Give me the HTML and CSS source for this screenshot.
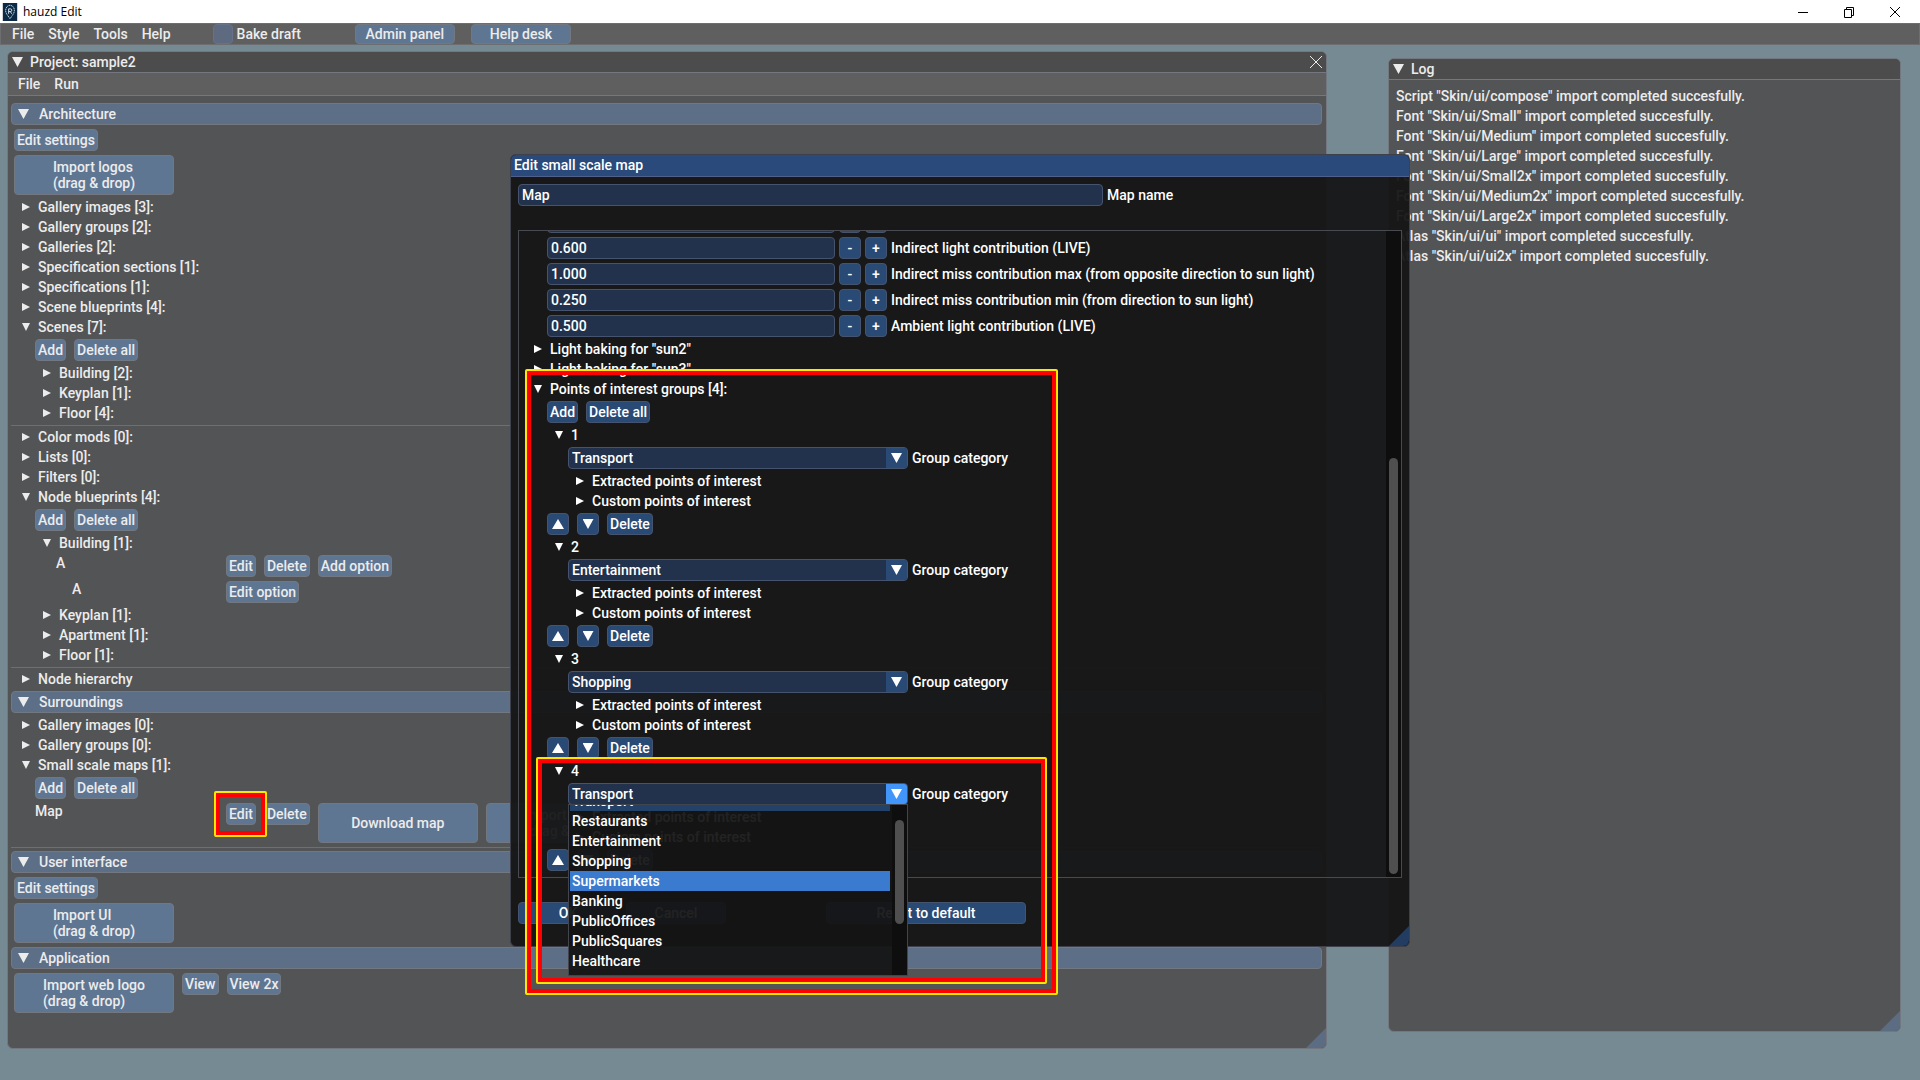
FILE: index.html
```html
<!DOCTYPE html>
<html lang="en">
<head>
<meta charset="utf-8">
<title>hauzd Edit</title>
<link rel="stylesheet" href="styles.css">
</head>
<body>
<header class="titlebar">
  <svg class="logo" viewBox="0 0 16 20" aria-hidden="true"><rect width="16" height="20" fill="#0c2a45"/><path d="M8 17.500L4.500 12.500C2 9 3 3 8 2.500C13 3 14 9 11.500 12.500Z" fill="none" stroke="#b8d4e2" stroke-width="1.100" stroke-dasharray="1.600 .6"/><path d="M6.500 12V6.500H8.500Q10 6.500 10 8T8.500 9.500H6.500M8.300 9.500L10 12" fill="none" stroke="#e4f2f8" stroke-width="1"/></svg>
  <span class="app-name">hauzd Edit</span>
  <div class="win-controls">
    <button aria-label="Minimize"><svg viewBox="0 0 12 12"><path d="M1 6.500H11" /></svg></button>
    <button aria-label="Restore"><svg viewBox="0 0 12 12"><path d="M1.500 3.500H8.500V11.500H1.500ZM3.500 3.500V1.500H10.500V9.500H8.500"/></svg></button>
    <button aria-label="Close"><svg viewBox="0 0 12 12"><path d="M1 1L11 11M11 1L1 11"/></svg></button>
  </div>
</header>
<nav class="menubar">
  <button class="menu">File</button><button class="menu">Style</button><button class="menu">Tools</button><button class="menu">Help</button>
  <label class="bake"><input type="checkbox">Bake draft</label>
  <div class="links"><button class="btn w100">Admin panel</button><button class="btn w100">Help desk</button></div>
</nav>

<main class="desktop">
  <section class="window project">
    <div class="bar"><i class="tri down big"></i><span>Project: sample2</span>
      <button class="close" aria-label="Close project"><svg viewBox="0 0 12 12"><path d="M0 0L12 12M12 0L0 12"/></svg></button></div>
    <div class="submenu"><button class="menu">File</button><button class="menu">Run</button></div>
    <div class="stack body">
      <button class="section"><i class="tri down big"></i>Architecture</button>
      <div class="row"><button class="btn">Edit settings</button></div>
      <div class="row"><button class="btn tall"><span>Import logos<br>(drag &amp; drop)</span></button></div>
      <button class="node"><i class="tri right"></i>Gallery images [3]:</button>
      <button class="node"><i class="tri right"></i>Gallery groups [2]:</button>
      <button class="node"><i class="tri right"></i>Galleries [2]:</button>
      <button class="node"><i class="tri right"></i>Specification sections [1]:</button>
      <button class="node"><i class="tri right"></i>Specifications [1]:</button>
      <button class="node"><i class="tri right"></i>Scene blueprints [4]:</button>
      <button class="node"><i class="tri down"></i>Scenes [7]:</button>
      <div class="stack indent">
        <div class="row"><button class="btn">Add</button><button class="btn">Delete all</button></div>
        <button class="node"><i class="tri right"></i>Building [2]:</button>
        <button class="node"><i class="tri right"></i>Keyplan [1]:</button>
        <button class="node"><i class="tri right"></i>Floor [4]:</button>
      </div>
      <hr>
      <button class="node"><i class="tri right"></i>Color mods [0]:</button>
      <button class="node"><i class="tri right"></i>Lists [0]:</button>
      <button class="node"><i class="tri right"></i>Filters [0]:</button>
      <button class="node"><i class="tri down"></i>Node blueprints [4]:</button>
      <div class="stack indent">
        <div class="row"><button class="btn">Add</button><button class="btn">Delete all</button></div>
        <button class="node"><i class="tri down"></i>Building [1]:</button>
        <div class="row"><span class="name level2">A</span><button class="btn">Edit</button><button class="btn">Delete</button><button class="btn">Add option</button></div>
        <div class="row"><span class="name level3">A</span><button class="btn">Edit option</button></div>
        <button class="node"><i class="tri right"></i>Keyplan [1]:</button>
        <button class="node"><i class="tri right"></i>Apartment [1]:</button>
        <button class="node"><i class="tri right"></i>Floor [1]:</button>
      </div>
      <hr>
      <button class="node"><i class="tri right"></i>Node hierarchy</button>
      <button class="section"><i class="tri down big"></i>Surroundings</button>
      <button class="node"><i class="tri right"></i>Gallery images [0]:</button>
      <button class="node"><i class="tri right"></i>Gallery groups [0]:</button>
      <button class="node"><i class="tri down"></i>Small scale maps [1]:</button>
      <div class="stack indent">
        <div class="row"><button class="btn">Add</button><button class="btn">Delete all</button></div>
        <div class="row"><span class="name">Map</span><span class="marked"><button class="btn">Edit</button></span><button class="btn">Delete</button><button class="btn tall">Download map</button><button class="btn tall"><span>Import map<br>(drag &amp; drop)</span></button></div>
      </div>
      <hr>
      <button class="section"><i class="tri down big"></i>User interface</button>
      <div class="row"><button class="btn">Edit settings</button></div>
      <div class="row"><button class="btn tall"><span>Import UI<br>(drag &amp; drop)</span></button></div>
      <button class="section"><i class="tri down big"></i>Application</button>
      <div class="row"><button class="btn tall"><span>Import web logo<br>(drag &amp; drop)</span></button><button class="btn">View</button><button class="btn">View 2x</button></div>
    </div>
    <i class="grip"></i>
  </section>

  <section class="window log">
    <div class="bar"><i class="tri down big"></i><span>Log</span></div>
    <ul class="stack">
      <li>Script "Skin/ui/compose" import completed succesfully.</li>
      <li>Font "Skin/ui/Small" import completed succesfully.</li>
      <li>Font "Skin/ui/Medium" import completed succesfully.</li>
      <li>Font "Skin/ui/Large" import completed succesfully.</li>
      <li>Font "Skin/ui/Small2x" import completed succesfully.</li>
      <li>Font "Skin/ui/Medium2x" import completed succesfully.</li>
      <li>Font "Skin/ui/Large2x" import completed succesfully.</li>
      <li>Atlas "Skin/ui/ui" import completed succesfully.</li>
      <li>Atlas "Skin/ui/ui2x" import completed succesfully.</li>
    </ul>
    <i class="grip"></i>
  </section>

  <section class="dialog" role="dialog" aria-labelledby="dialog-title">
    <h1 class="dialog-title" id="dialog-title">Edit small scale map</h1>
    <div class="dialog-body">
      <div class="field"><input class="text" id="map-name" value="Map"><label for="map-name">Map name</label></div>
      <div class="scroll">
        <div class="stack settings">
          <div class="field"><input class="text num" aria-label="Direct light contribution"><button class="btn step" aria-label="Decrease"></button><button class="btn step" aria-label="Increase"></button></div>
          <div class="field"><input class="text num" id="n1" value="0.600"><button class="btn step">-</button><button class="btn step">+</button><label for="n1">Indirect light contribution (LIVE)</label></div>
          <div class="field"><input class="text num" id="n2" value="1.000"><button class="btn step">-</button><button class="btn step">+</button><label for="n2">Indirect miss contribution max (from opposite direction to sun light)</label></div>
          <div class="field"><input class="text num" id="n3" value="0.250"><button class="btn step">-</button><button class="btn step">+</button><label for="n3">Indirect miss contribution min (from direction to sun light)</label></div>
          <div class="field"><input class="text num" id="n4" value="0.500"><button class="btn step">-</button><button class="btn step">+</button><label for="n4">Ambient light contribution (LIVE)</label></div>
          <button class="node"><i class="tri right"></i>Light baking for "sun2"</button>
          <button class="node"><i class="tri right"></i>Light baking for "sun3"</button>
          <button class="node"><i class="tri down"></i>Points of interest groups [4]:</button>
          <div class="row"><button class="btn">Add</button><button class="btn">Delete all</button></div>

          <div class="stack group">
            <button class="node"><i class="tri down"></i>1</button>
            <div class="field"><span class="combo"><select id="g1"><option>Transport</option></select><b><i class="tri down big"></i></b></span><label for="g1">Group category</label></div>
            <button class="node sub"><i class="tri right"></i>Extracted points of interest</button>
            <button class="node sub"><i class="tri right"></i>Custom points of interest</button>
          </div>
          <div class="row"><button class="btn move" aria-label="Move up"><i class="tri up"></i></button><button class="btn move" aria-label="Move down"><i class="tri down big"></i></button><button class="btn">Delete</button></div>

          <div class="stack group">
            <button class="node"><i class="tri down"></i>2</button>
            <div class="field"><span class="combo"><select id="g2"><option>Entertainment</option></select><b><i class="tri down big"></i></b></span><label for="g2">Group category</label></div>
            <button class="node sub"><i class="tri right"></i>Extracted points of interest</button>
            <button class="node sub"><i class="tri right"></i>Custom points of interest</button>
          </div>
          <div class="row"><button class="btn move" aria-label="Move up"><i class="tri up"></i></button><button class="btn move" aria-label="Move down"><i class="tri down big"></i></button><button class="btn">Delete</button></div>

          <div class="stack group">
            <button class="node"><i class="tri down"></i>3</button>
            <div class="field"><span class="combo"><select id="g3"><option>Shopping</option></select><b><i class="tri down big"></i></b></span><label for="g3">Group category</label></div>
            <button class="node sub"><i class="tri right"></i>Extracted points of interest</button>
            <button class="node sub"><i class="tri right"></i>Custom points of interest</button>
          </div>
          <div class="row"><button class="btn move" aria-label="Move up"><i class="tri up"></i></button><button class="btn move" aria-label="Move down"><i class="tri down big"></i></button><button class="btn">Delete</button></div>

          <div class="stack group">
            <button class="node"><i class="tri down"></i>4</button>
            <div class="field"><span class="combo open"><select id="g4"><option>Transport</option></select><b><i class="tri down big"></i></b></span><label for="g4">Group category</label></div>
            <button class="node sub"><i class="tri right"></i>Extracted points of interest</button>
            <button class="node sub"><i class="tri right"></i>Custom points of interest</button>
          </div>
          <div class="row"><button class="btn move" aria-label="Move up"><i class="tri up"></i></button><button class="btn move" aria-label="Move down"><i class="tri down big"></i></button><button class="btn">Delete</button></div>
        </div>
        <div class="track"><div class="thumb"></div></div>
      </div>
      <div class="actions"><button class="btn w100">OK</button><button class="btn w100">Cancel</button><button class="btn reset">Reset to default</button></div>
    </div>
    <i class="grip"></i>

    <div class="popup">
      <ul role="listbox" aria-label="Group category">
        <li role="option" class="current" aria-selected="true">Transport</li>
        <li role="option">Restaurants</li>
        <li role="option">Entertainment</li>
        <li role="option">Shopping</li>
        <li role="option" class="hover">Supermarkets</li>
        <li role="option">Banking</li>
        <li role="option">PublicOffices</li>
        <li role="option">PublicSquares</li>
        <li role="option">Healthcare</li>
        <li role="option">Leisure</li>
      </ul>
      <div class="track"><div class="thumb"></div></div>
    </div>
    <div class="mark mark-groups"></div>
    <div class="mark mark-fourth"></div>
  </section>
</main>
</body>
</html>
```
FILE: styles.css
```css
* { box-sizing: border-box; }

body {
  margin: 0;
  height: 100vh;
  display: flex;
  flex-direction: column;
  overflow: hidden;
  background: #768a94;
  color: #ececec;
  font: 500 14px/16px Roboto, "Liberation Sans", sans-serif;
  --line: #73777f;
  --btn: #5f7693;
}

button, input, select { font: inherit; color: inherit; margin: 0; }
button { background: none; border: 0; padding: 0; text-align: left; white-space: nowrap; }
ul { list-style: none; margin: 0; padding: 0; }

/* Native title bar */
.titlebar { flex: none; height: 23px; display: flex; align-items: center; padding-left: 2px; background: #fff; color: #000; font: 400 12px/16px "Open Sans", sans-serif; }
.logo { width: 16px; height: 18px; margin-right: 5px; }
.win-controls { margin-left: auto; display: flex; padding-right: 2px; }
.win-controls button { width: 46px; height: 20px; display: flex; align-items: center; justify-content: center; }
.win-controls svg { width: 12px; height: 12px; fill: none; stroke: #000; }

/* Main menu */
.menubar { flex: none; height: 22px; display: flex; align-items: center; gap: 14px; padding: 0 11px; background: #5f5f5f; border: 1px solid #6d6e72; }
.bake { display: flex; align-items: center; gap: 4px; margin-left: 28px; }
.bake input { appearance: none; width: 20px; height: 20px; margin: 0; border: 1px solid #66718a; border-radius: 4px; background: #5d6a80; }
.links { display: flex; gap: 16px; margin-left: 40px; }
.links .btn { height: 20px; }

/* Widgets */
.btn { height: 22px; padding: 0 2px; display: flex; align-items: center; justify-content: center; background: var(--btn); border: 1px solid var(--line); border-radius: 4px; }
.w100 { width: 100px; }
.tall { width: 160px; height: 40px; }
.tri { flex: none; display: block; width: 8px; height: 8px; background: currentColor; }
.right { clip-path: polygon(0 0, 100% 50%, 0 100%); }
.down { clip-path: polygon(0 0, 100% 0, 50% 100%); }
.up { width: 12px; height: 10px; clip-path: polygon(0 100%, 100% 100%, 50% 0); }
.big { width: 11px; height: 10px; }
.stack { display: flex; flex-direction: column; gap: 4px; }
.row { display: flex; align-items: flex-start; gap: 8px; }
.node { display: flex; align-items: center; gap: 8px; height: 16px; padding-left: 8px; }
.grip { position: absolute; right: 0; bottom: 0; width: 20px; height: 20px; background: #5c6c82; clip-path: polygon(100% 0, 100% 100%, 0 100%); }

/* Floating windows */
.desktop { flex: 1; position: relative; display: flex; align-items: center; justify-content: center; padding-bottom: 24px; }
.window { position: absolute; overflow: hidden; background: #535455; border: 1px solid var(--line); border-radius: 6px; }
.project { left: 7px; top: 6px; bottom: 31px; width: 1320px; }
.log { right: 19px; top: 13px; bottom: 48px; width: 513px; }
.bar { height: 21px; display: flex; align-items: center; gap: 7px; padding: 0 4px; background: #4c4c4c; border-bottom: 1px solid var(--line); }
.close { margin-left: auto; width: 12px; height: 12px; }
.close svg { display: block; fill: none; stroke: #ececec; stroke-width: 1; }
.submenu { height: 23px; display: flex; align-items: center; gap: 14px; padding: 0 10px; background: #5f5f5f; border-bottom: 1px solid var(--line); }
.body { padding: 7px 4px 0 3px; }
.body .row, .body > .node { margin-left: 3px; }
.section { height: 22px; display: flex; align-items: center; gap: 10px; padding: 0 6px; background: #5d6e87; border: 1px solid var(--line); border-radius: 4px; }
.indent { padding-left: 21px; }
.indent .node { padding-left: 11px; }
hr { width: 100%; height: 1px; margin: 0 0 -1px; border: 0; background: #6d6f75; }
.name { width: 183px; }
.level2 { padding-left: 21px; }
.level3 { padding-left: 37px; }
.log ul { padding: 8px 7px; }

/* Dialog */
.dialog { position: relative; width: 900px; background: rgb(20 20 20 / .94); border: 1px solid #3e404b; border-radius: 6px; color: #fff; --line: #45536e; --btn: #294a75; }
.dialog-title { margin: 0; height: 22px; padding: 2px 3px; font: inherit; background: #294a7a; border-bottom: 1px solid #50608a; border-radius: 5px 5px 0 0; }
.dialog-body { padding: 7px 7px 22px; }
.field { display: flex; align-items: center; gap: 4px; }
.text { height: 22px; flex: 0 0 585px; min-width: 0; padding: 0 3px; background: #22324d; border: 1px solid var(--line); border-radius: 4px; outline: 0; }
.num { flex-basis: 288px; }
.step { width: 22px; }
.scroll { display: flex; height: 648px; margin: 24px 0; border: 1px solid #484a52; overflow: hidden; }
.settings { flex: 1; justify-content: flex-end; padding-bottom: 6px; }
.settings > .field, .settings > .row { margin-left: 28px; }
.settings > .node, .group > .node { flex: none; padding-left: 15px; }
.settings > * { flex: none; }
.group { padding-left: 21px; }
.group > .field { margin-left: 28px; }
.group > .sub { padding-left: 36px; }
.combo { width: 340px; height: 22px; display: flex; border: 1px solid var(--line); border-radius: 4px; overflow: hidden; background: #22324d; }
.combo select { flex: 1; appearance: none; border: 0; padding: 0 3px; background: none; outline: 0; }
.combo b { width: 21px; display: flex; align-items: center; justify-content: center; background: #294a75; }
.combo.open b { background: #4296fa; }
.move { width: 22px; }
.track { flex: none; width: 15px; padding: 3px; display: flex; flex-direction: column; background: #0e0e0f; }
.thumb { border-radius: 5px; background: #4f4f4f; }
.scroll .thumb { margin-top: auto; height: 65%; }
.actions { display: flex; gap: 8px; }
.reset { width: 200px; margin-left: 92px; }
.dialog > .grip { background: #223c62; border-radius: 0 0 6px 0; }

/* Open drop-down list over the dialog */
.popup { position: absolute; left: 57px; top: 649px; width: 340px; height: 172px; display: flex; background: rgb(20 20 20 / .94); border: 1px solid #43454d; overflow: hidden; }
.popup ul { flex: 1; align-self: flex-start; margin: -14px 2px 0 1px; }
.popup li { height: 20px; padding: 2px; }
.popup .current { background: #23426a; }
.popup .hover { background: #3a7bd0; }
.popup .thumb { margin-top: 12px; height: 104px; }

/* Attention frames */
.mark, .marked::after { position: absolute; border: 2px solid #ffe600; border-radius: 2px; box-shadow: inset 0 0 0 4px #f00; pointer-events: none; }
.mark-groups { left: 14px; top: 214px; width: 533px; height: 626px; }
.mark-fourth { left: 25px; top: 602px; width: 511px; height: 227px; }
.marked { position: relative; }
.marked::after { content: ""; inset: -12px -11px -12px -12px; }
```
